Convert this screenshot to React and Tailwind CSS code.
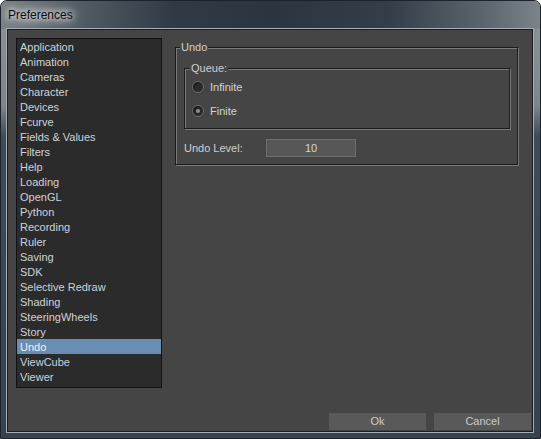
import React from "react";

const items = [
  "Application", "Animation", "Cameras", "Character", "Devices", "Fcurve",
  "Fields & Values", "Filters", "Help", "Loading", "OpenGL", "Python",
  "Recording", "Ruler", "Saving", "SDK", "Selective Redraw", "Shading",
  "SteeringWheels", "Story", "Undo", "ViewCube", "Viewer",
];

function Radio({ checked, label }) {
  return (
    <div className="flex h-[24px] items-center">
      <div className="flex h-[12px] w-[12px] items-center justify-center rounded-full border border-[#6c6c6c] bg-[#2a2a2a] shadow-[inset_1px_1px_1px_#111]">
        {checked && <div className="h-[4px] w-[4px] rounded-full bg-[#8e8e8e]" />}
      </div>
      <span className="ml-[6px] text-[11px] text-[#d2d2d2]">{label}</span>
    </div>
  );
}

export default function App() {
  return (
    <div
      className="flex h-[439px] w-[541px] flex-col overflow-hidden rounded-t-[7px] border border-[#1c232a] bg-[linear-gradient(180deg,#8d959b_0%,#7d858c_24%,#3e4b58_31%,#35424f_100%)]"
      style={{ fontFamily: '"Liberation Sans", Arial, sans-serif' }}
    >
      <div className="flex h-[28px] shrink-0 items-center bg-[linear-gradient(90deg,#7a8187_0%,#545d65_14%,#2f3a45_32%,#2a3540_50%,#333e49_72%,#5d666e_90%,#7c8389_100%)] pl-[7px]">
        <span className="text-[12px] text-[#0c0c0c] [text-shadow:0_0_6px_#ffffff,0_0_10px_#ffffff,0_0_16px_rgba(255,255,255,0.8)]">
          Preferences
        </span>
      </div>
      <div className="ml-[6px] mr-[7px] flex h-[403px] shrink-0 flex-col border border-[#1e1e1e] bg-[#454545] shadow-[0_0_0_1px_#a6aeb5]">
        <div className="flex pl-[8px] pt-[8px]">
          <div className="h-[350px] w-[146px] border border-[#121212] bg-[#2b2b2b]">
            {items.map((it) => (
              <div
                key={it}
                className={
                  it === "Undo"
                    ? "h-[15px] bg-[#6a8db4] pl-[3px] text-[11px] leading-[17px] text-[#eef2f6]"
                    : "h-[15px] pl-[3px] text-[11px] leading-[17px] text-[#cdd3d9]"
                }
              >
                {it}
              </div>
            ))}
          </div>
          <div className="relative ml-[13px] mt-[9px] h-[118px] w-[343px] border border-[#1a1a1a] shadow-[1px_1px_0_#7a7a7a,inset_1px_1px_0_#7a7a7a]">
            <span className="absolute left-[4px] top-[-7px] bg-[#454545] px-[1px] text-[11px] leading-[13px] text-[#cfcfcf]">
              Undo
            </span>
            <div className="relative ml-[8px] mt-[20px] h-[61px] w-[326px] border border-[#1a1a1a] pl-[7px] pt-[6px] shadow-[1px_1px_0_#7a7a7a,inset_1px_1px_0_#7a7a7a]">
              <span className="absolute left-[5px] top-[-7px] bg-[#454545] px-[1px] text-[11px] leading-[13px] text-[#cfcfcf]">
                Queue:
              </span>
              <Radio label="Infinite" />
              <Radio checked label="Finite" />
            </div>
            <div className="ml-[8px] mt-[10px] flex h-[18px] items-center">
              <span className="w-[82px] text-[11px] text-[#d0d0d0]">Undo Level:</span>
              <div className="flex h-[18px] w-[90px] items-center justify-center border border-[#6e6e6e] bg-[#575757] text-[11px] text-[#d6d6d6]">
                10
              </div>
            </div>
          </div>
        </div>
        <div className="mt-auto flex justify-end gap-[8px] pb-[1px] pr-[1px]">
          <div className="flex h-[17px] w-[97px] items-center justify-center bg-[#595959] text-[11px] text-[#cacaca]">
            Ok
          </div>
          <div className="flex h-[17px] w-[97px] items-center justify-center bg-[#595959] text-[11px] text-[#cacaca]">
            Cancel
          </div>
        </div>
      </div>
    </div>
  );
}
